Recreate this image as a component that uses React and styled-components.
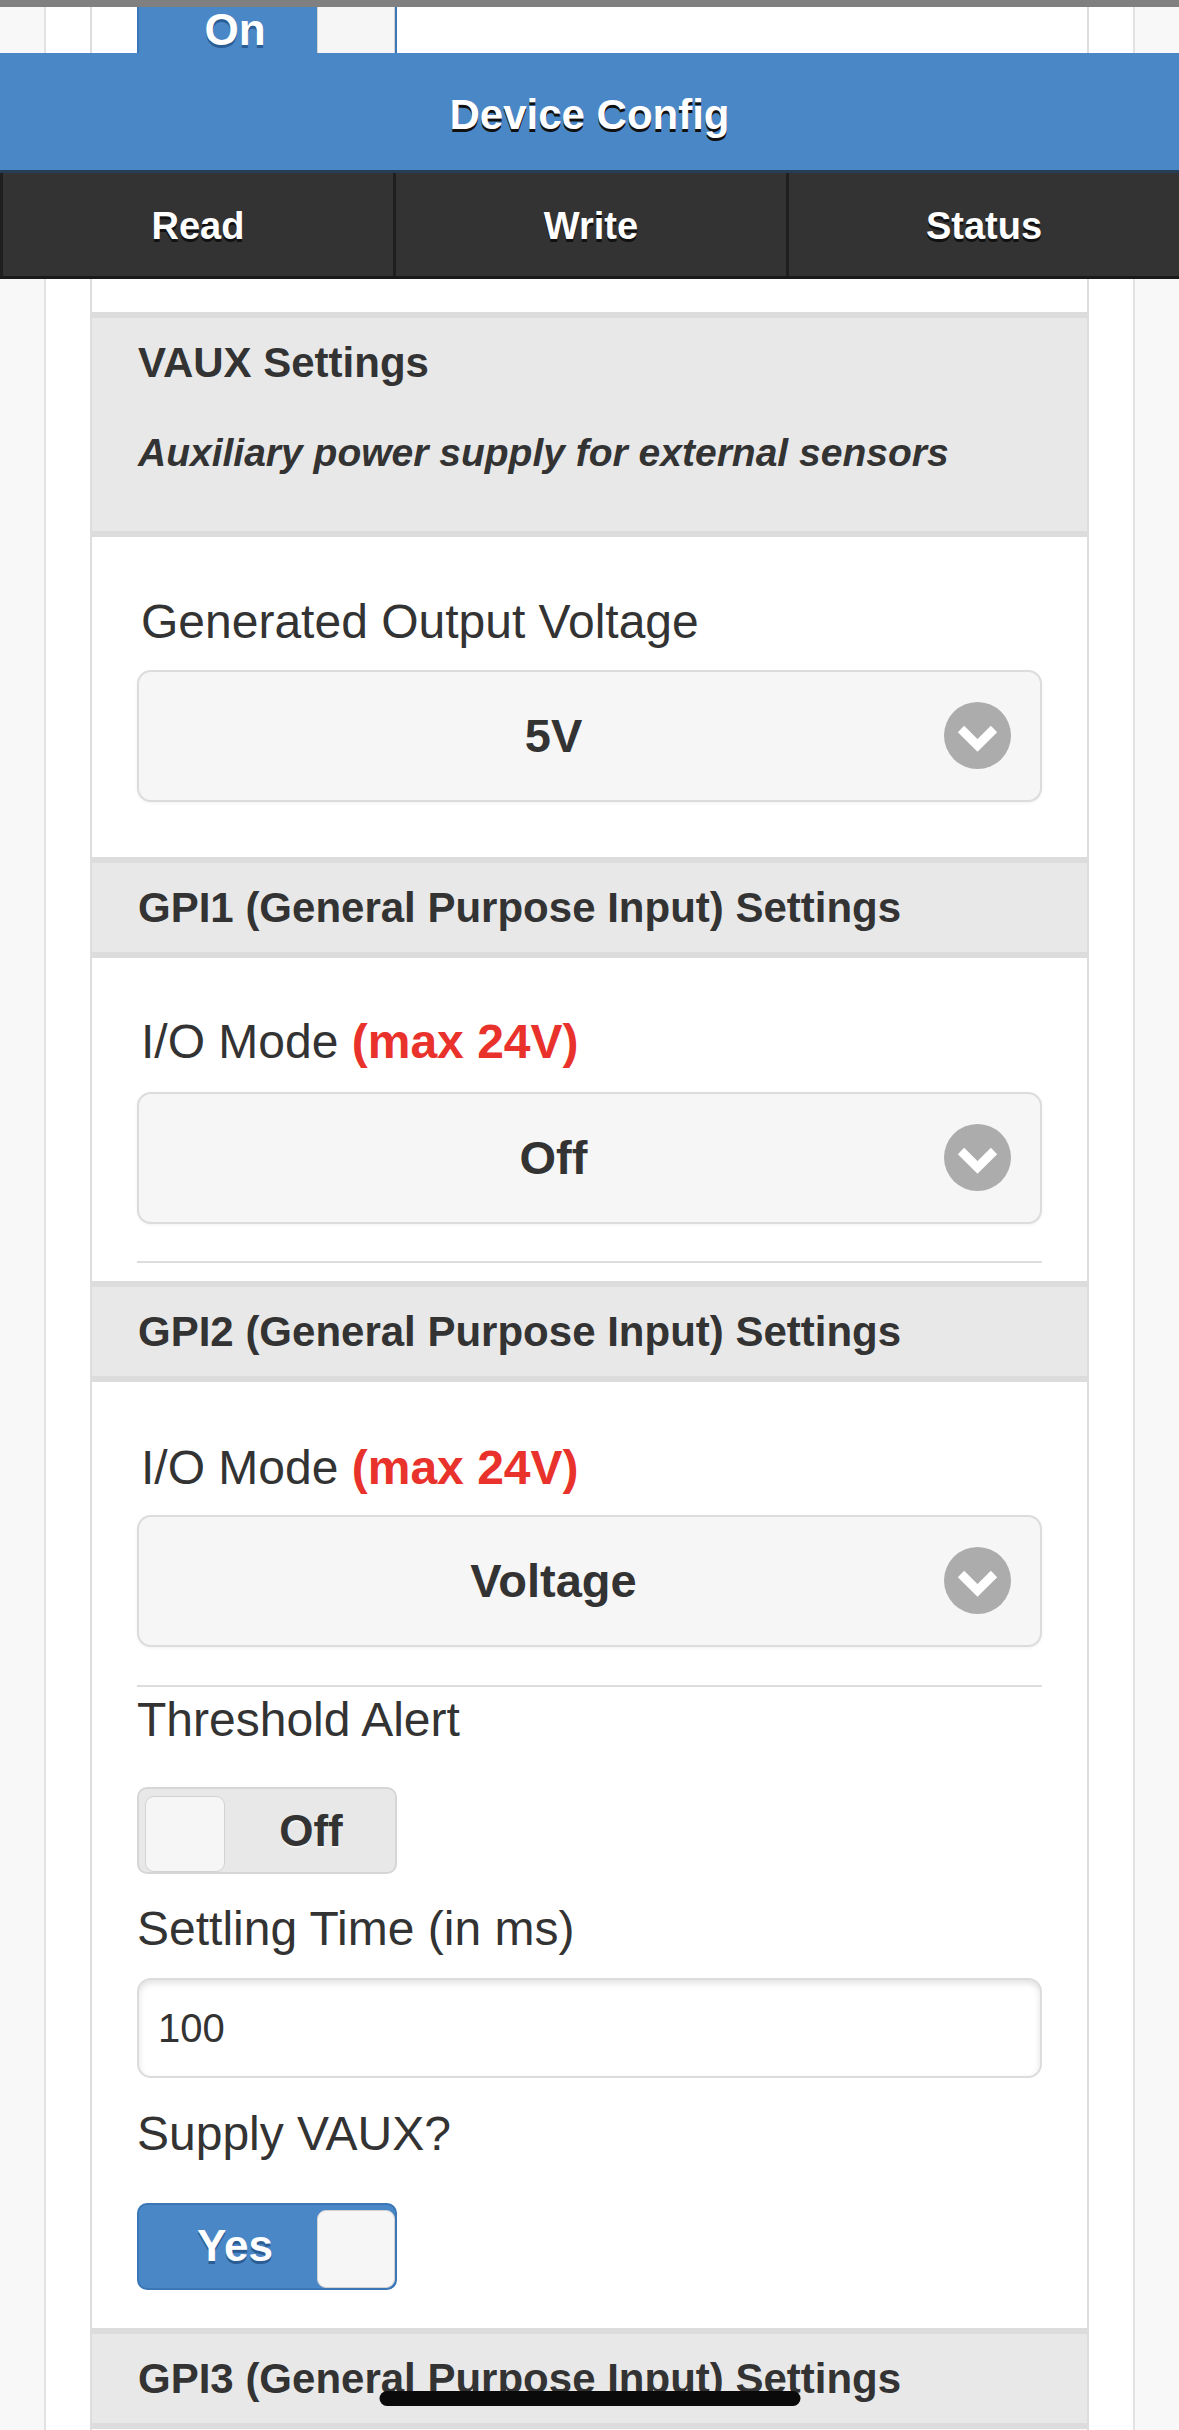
import React from "react";
import styled, { createGlobalStyle } from "styled-components";

const GlobalStyle = createGlobalStyle`
  html, body {
    margin: 0;
    padding: 0;
    background: #f8f8f8;
  }
  body {
    font-family: "Liberation Sans", Arial, Helvetica, sans-serif;
    color: #333;
  }
  * {
    box-sizing: border-box;
  }
`;

const Screen = styled.div`
  width: 1179px;
  min-height: 2430px;
  background: #f8f8f8;
  overflow: hidden;
`;

const StatusStrip = styled.div`
  height: 7px;
  background: #808080;
`;

const Frame = styled.div`
  margin: 0 44px;
  padding: 0 44px;
  background: #fff;
  border-left: 2px solid #e2e2e2;
  border-right: 2px solid #e2e2e2;
`;

const Column = styled.div`
  background: #fff;
  border-left: 2px solid #dddddd;
  border-right: 2px solid #dddddd;
  padding-top: ${props => props.$top || 0}px;
`;

const PeekRow = styled.div`
  height: 46px;
  overflow: hidden;
  display: flex;
  align-items: center;
  padding-left: 45px;
`;

const AppHeader = styled.header`
  height: 117px;
  padding-top: 6px;
  background: #4a87c6;
  display: flex;
  align-items: center;
  justify-content: center;
  color: #fff;
  font-size: 42px;
  font-weight: bold;
  text-shadow: 0 3px 0 #111;
`;

const NavBar = styled.nav`
  display: grid;
  grid-template-columns: repeat(3, 1fr);
  gap: 3px;
  padding-left: 3px;
  background: #1f1f1f;
  border-top: 3px solid #263d58;
  border-bottom: 3px solid #1a1a1a;
`;

const NavButton = styled.a`
  height: 103px;
  padding-top: 4px;
  display: flex;
  align-items: center;
  justify-content: center;
  background: #333;
  color: #fff;
  font-size: 38px;
  font-weight: bold;
  text-shadow: 0 3px 0 #111;
  text-decoration: none;
`;

const SectionHead = styled.div`
  background: #e8e8e8;
  border-top: 6px solid #dcdcdc;
  border-bottom: 6px solid #dcdcdc;
  padding: 18px 46px 17px;
`;

const SectionTitle = styled.h3`
  margin: 0;
  font-size: 42px;
  line-height: 1.3;
  font-weight: bold;
  color: #333;
`;

const SectionNote = styled.p`
  margin: 37px 0 36px;
  font-size: 39px;
  line-height: 1.3;
  font-weight: bold;
  font-style: italic;
  color: #333;
`;

const SectionBody = styled.div`
  display: flex;
  flex-direction: column;
  padding: ${props => props.$top}px 45px ${props => props.$bottom}px;
`;

const FieldLabel = styled.label`
  display: block;
  font-size: 48px;
  line-height: 1.3;
  color: #333;
  margin: ${props => props.$mt || 0}px 0 ${props => props.$mb || 0}px ${props => props.$indent ? 4 : 0}px;
`;

const Warn = styled.span`
  color: #e8322b;
  font-weight: bold;
`;

const SelectBox = styled.div`
  display: flex;
  align-items: center;
  height: 132px;
  padding: 0 29px 0 48px;
  background: #f6f6f6;
  border: 2px solid #dcdcdc;
  border-radius: 14px;
  box-shadow: 0 1px 3px rgba(0, 0, 0, 0.06);
  font-size: 47px;
  font-weight: bold;
  color: #333;
`;

const SelectValue = styled.span`
  flex: 1;
  text-align: center;
  margin-right: 24px;
`;

const Rule = styled.hr`
  margin: ${props => props.$mt || 0}px 0 0;
  border: 0;
  height: 2px;
  background: #dddddd;
`;

const TextInput = styled.input`
  display: block;
  width: 100%;
  height: 100px;
  padding: 0 19px;
  border: 2px solid #dcdcdc;
  border-radius: 14px;
  background: #fff;
  box-shadow: inset 0 3px 6px rgba(0, 0, 0, 0.12);
  font-family: inherit;
  font-size: 40px;
  color: #333;
  outline: none;
`;

const FlipTrack = styled.div`
  position: relative;
  flex-shrink: 0;
  width: 260px;
  height: 87px;
  margin-top: ${props => props.$mt || 0}px;
  display: flex;
  align-items: center;
  border-radius: 10px;
  border: 2px solid ${props => props.$on ? "#3b76b6" : "#d6d6d6"};
  background: ${props => props.$on ? "#4a87c6" : "#e8e8e8"};
  color: ${props => props.$on ? "#fff" : "#333"};
  font-size: 44px;
  font-weight: bold;
  text-shadow: ${props => props.$on ? "0 3px 0 #2a5d94" : "0 2px 0 #f3f3f3"};
`;

const FlipText = styled.span`
  flex: 1;
  line-height: 1;
  text-align: center;
  padding: ${props => props.$on ? "0 80px 0 16px" : "0 0 0 88px"};
`;

const FlipHandle = styled.span`
  position: absolute;
  top: ${props => props.$on ? 5 : 7}px;
  bottom: 0;
  ${props => props.$on ? "right: 0;" : "left: 6px;"}
  width: ${props => props.$on ? 78 : 80}px;
  background: #f6f6f6;
  border: 1px solid #d2d2d2;
  border-radius: 9px;
`;

const HomeIndicator = styled.div`
  position: fixed;
  left: 50%;
  bottom: 24px;
  transform: translateX(-50%);
  width: 421px;
  height: 15px;
  border-radius: 8px;
  background: #0a0a0a;
`;

const Chevron = () => (
    <svg width="67" height="67" viewBox="0 0 67 67" aria-hidden="true">
        <circle cx="33.5" cy="33.5" r="33.5" fill="#acacac"/>
        <polyline points="17,27 33.5,43.5 50,27" fill="none" stroke="#fff" strokeWidth="9"
            strokeLinejoin="miter" strokeLinecap="butt"/>
    </svg>
);

const Select = ({ value }) => (
    <SelectBox>
        <SelectValue>{value}</SelectValue>
        <Chevron/>
    </SelectBox>
);

const Flip = ({ on, label, mt }) => (
    <FlipTrack $on={on} $mt={mt}>
        <FlipText $on={on}>{label}</FlipText>
        <FlipHandle $on={on}/>
    </FlipTrack>
);

const Section = ({ title, note }) => (
    <SectionHead>
        <SectionTitle>{title}</SectionTitle>
        {note && <SectionNote>{note}</SectionNote>}
    </SectionHead>
);

const ModeLabel = ({ mb }) => (
    <FieldLabel $indent $mb={mb}>I/O Mode <Warn>(max 24V)</Warn></FieldLabel>
);

export default function App() {
    return <Screen>
        <GlobalStyle/>
        <StatusStrip/>
        <Frame>
            <Column>
                <PeekRow>
                    <Flip on label="On"/>
                </PeekRow>
            </Column>
        </Frame>
        <AppHeader>Device Config</AppHeader>
        <NavBar>
            <NavButton>Read</NavButton>
            <NavButton>Write</NavButton>
            <NavButton>Status</NavButton>
        </NavBar>
        <Frame>
            <Column $top={33}>
                <Section title="VAUX Settings" note="Auxiliary power supply for external sensors"/>
                <SectionBody $top={54} $bottom={55}>
                    <FieldLabel $indent $mb={16}>Generated Output Voltage</FieldLabel>
                    <Select value="5V"/>
                </SectionBody>

                <Section title="GPI1 (General Purpose Input) Settings"/>
                <SectionBody $top={53} $bottom={18}>
                    <ModeLabel mb={18}/>
                    <Select value="Off"/>
                    <Rule $mt={37}/>
                </SectionBody>

                <Section title="GPI2 (General Purpose Input) Settings"/>
                <SectionBody $top={55} $bottom={38}>
                    <ModeLabel mb={15}/>
                    <Select value="Voltage"/>
                    <Rule $mt={38}/>
                    <FieldLabel $mt={2}>Threshold Alert</FieldLabel>
                    <Flip on={false} label="Off" mt={36}/>
                    <FieldLabel $mt={24} $mb={18}>Settling Time (in ms)</FieldLabel>
                    <TextInput value="100" readOnly/>
                    <FieldLabel $mt={25}>Supply VAUX?</FieldLabel>
                    <Flip on label="Yes" mt={37}/>
                </SectionBody>

                <Section title="GPI3 (General Purpose Input) Settings"/>
                <SectionBody $top={40} $bottom={40}/>
            </Column>
        </Frame>
        <HomeIndicator/>
    </Screen>;
}
